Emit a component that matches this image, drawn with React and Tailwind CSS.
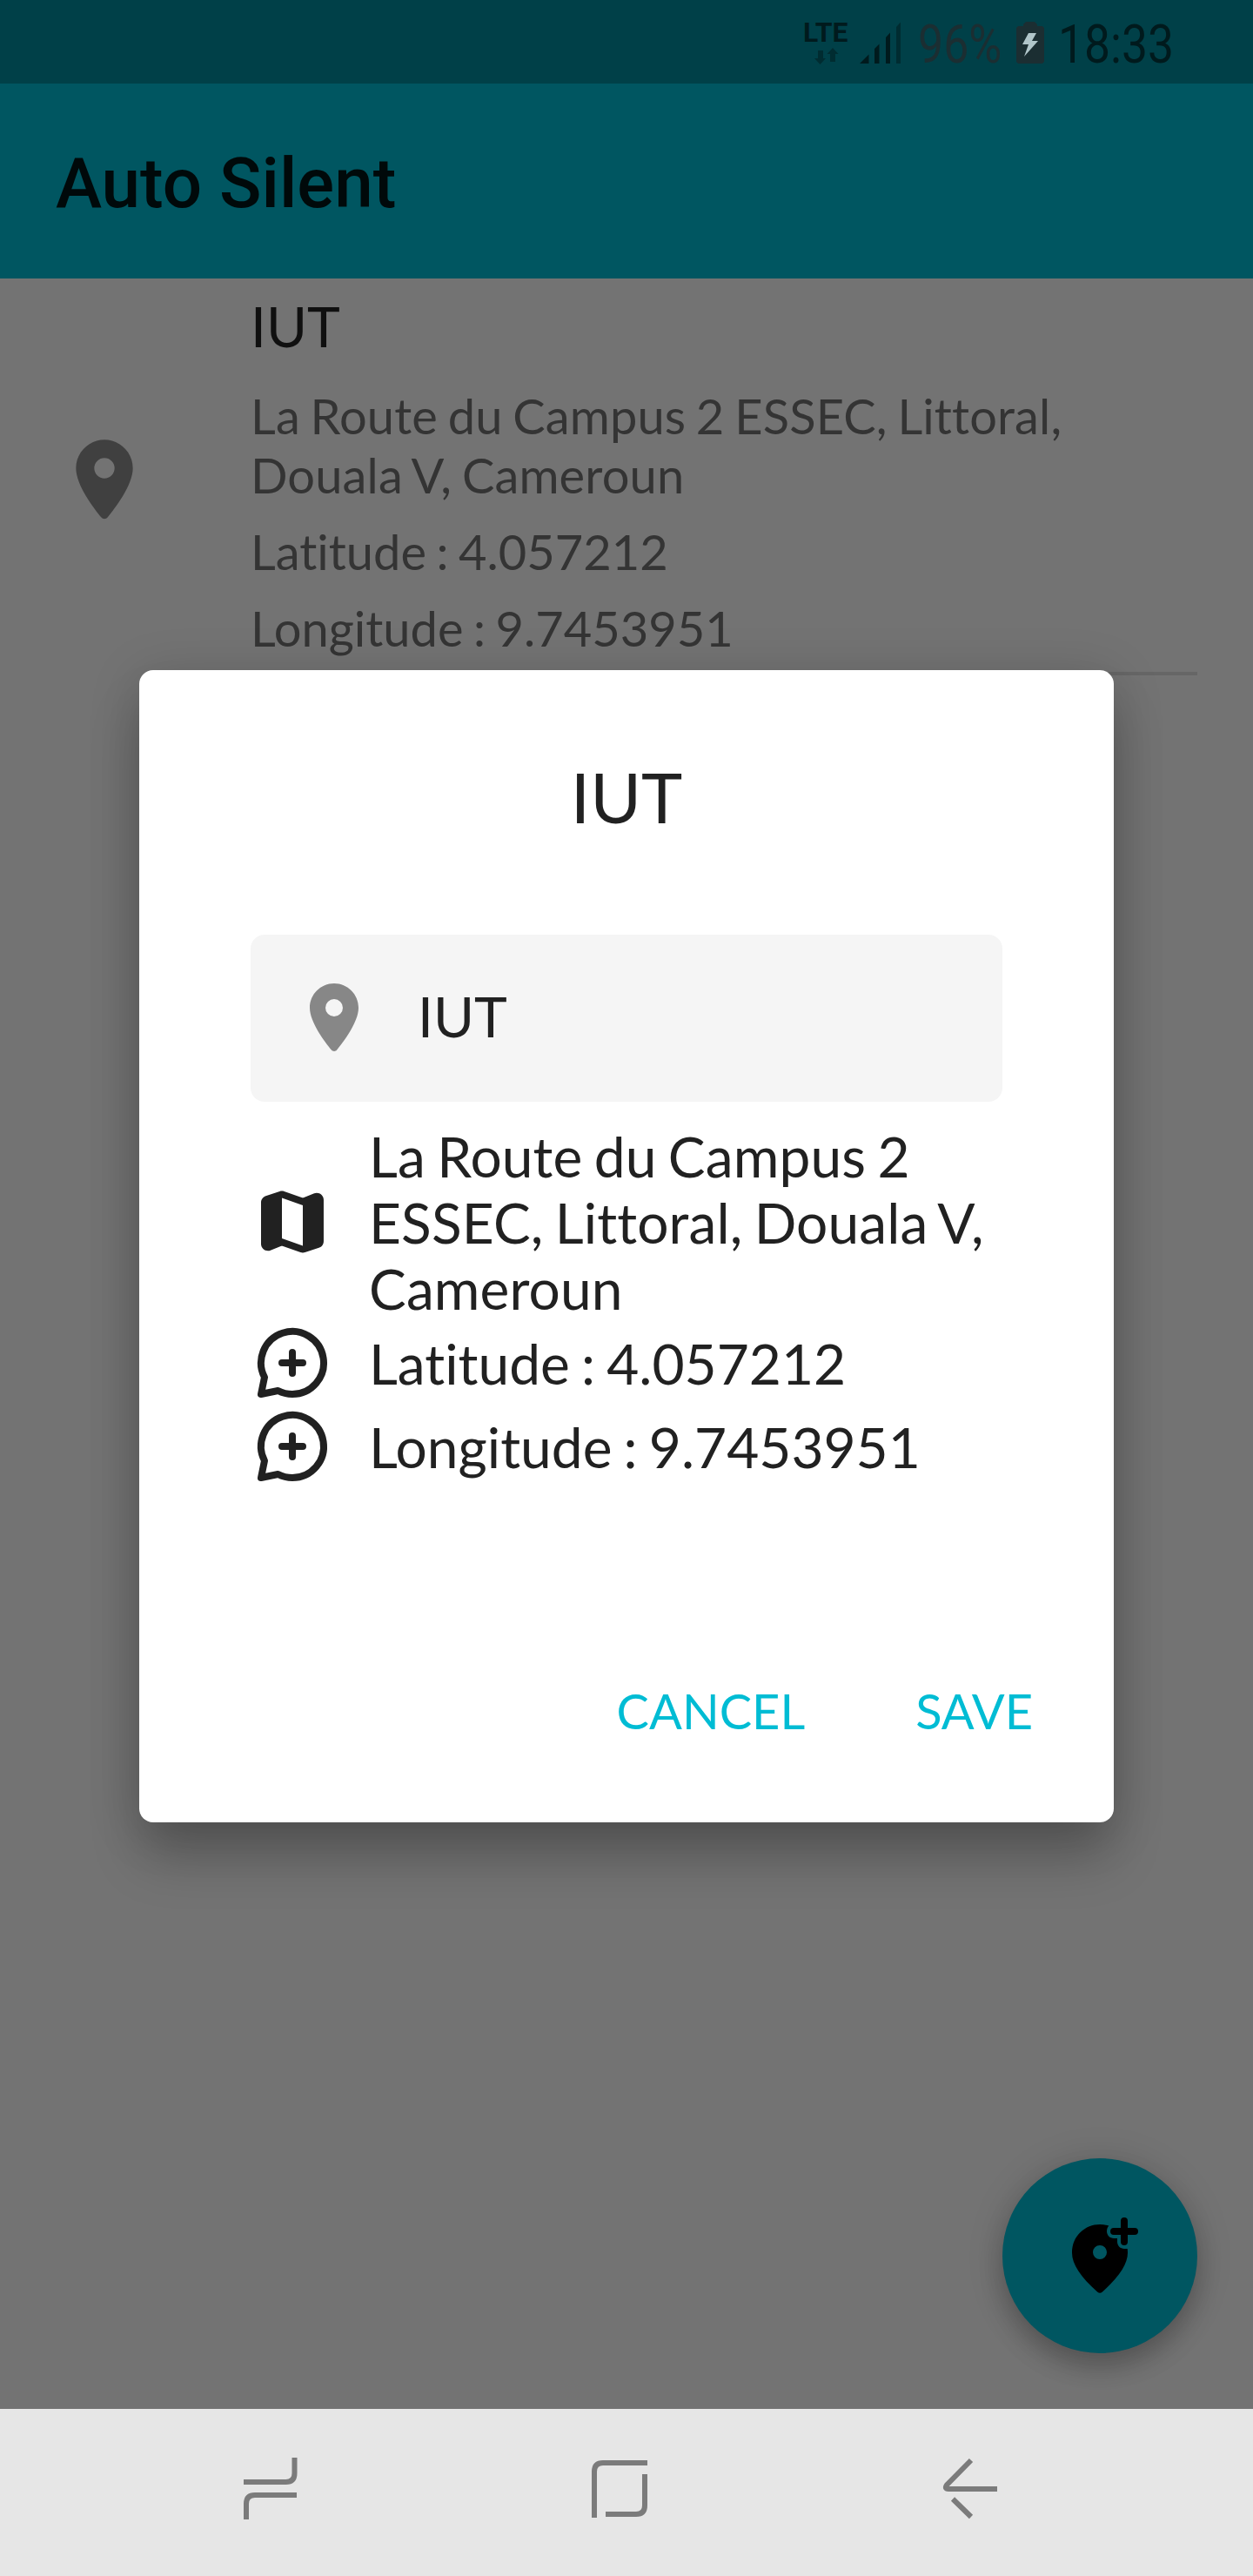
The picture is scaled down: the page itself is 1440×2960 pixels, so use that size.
import React from "react";

const PIN =
  "M12 2C8.13 2 5 5.13 5 9c0 4.17 4.42 9.92 6.24 12.11.4.48 1.13.48 1.53 0C14.58 18.92 19 13.17 19 9c0-3.87-3.13-7-7-7zm0 9.5a2.5 2.5 0 0 1 0-5 2.5 2.5 0 0 1 0 5z";

function PinIcon({ className }) {
  return (
    <svg viewBox="0 0 24 24" fill="currentColor" className={className}>
      <path d={PIN} />
    </svg>
  );
}

function MapIcon() {
  return (
    <svg viewBox="0 0 24 24" fill="currentColor" className="size-24 shrink-0">
      <path d="M14.65 4.98l-5-1.75c-.42-.15-.88-.15-1.3-.01L4.36 4.56C3.55 4.84 3 5.6 3 6.46v11.85c0 1.41 1.41 2.37 2.72 1.86l2.93-1.14c.22-.09.47-.09.69-.01l5 1.75c.42.15.88.15 1.3.01l3.99-1.34c.81-.27 1.36-1.04 1.36-1.9V5.69c0-1.41-1.41-2.37-2.72-1.86l-2.93 1.14c-.22.08-.46.09-.69.01zM15 18.89l-6-2.11V5.11l6 2.11v11.67z" />
    </svg>
  );
}

function CommentPlusIcon() {
  return (
    <svg
      viewBox="0 0 24 24"
      fill="none"
      stroke="currentColor"
      strokeWidth="2"
      strokeLinecap="round"
      strokeLinejoin="round"
      className="size-24 shrink-0"
    >
      <path d="M9 12h3m0 0h3m-3 0v3m0-3V9m0 12a9 9 0 1 0-8-4.873L3 21l4.873-1c1.236.64 2.64 1 4.127 1z" />
    </svg>
  );
}

function AddLocationIcon() {
  return (
    <svg viewBox="0 0 24 24" fill="currentColor" className="size-24">
      <path d="M20 6h2a1 1 0 0 0 0-2h-2V2a1 1 0 0 0-2 0v2h-2a1 1 0 0 0 0 2h2v2a1 1 0 0 0 2 0z" />
      <path d="M14.6 3.4C13.8 3.14 12.93 3 12 3c-4.2 0-8 3.22-8 8.2 0 3.18 2.45 6.92 7.34 11.23.38.33.95.33 1.33 0C17.55 18.12 20 14.38 20 11.2c0-.41-.02-.81-.08-1.2H19c-1.1 0-2-.9-2-2V7h-1c-1.1 0-2-.9-2-2 0-.64.22-1.2.6-1.6zM12 13a2 2 0 1 1 0-4 2 2 0 0 1 0 4z" />
    </svg>
  );
}

function StatusBar() {
  return (
    <header className="flex h-24 bg-[#004048] font-[Roboto,sans-serif]">
      <div className="mt-[22px] ml-[923px] w-[53px]">
        <div className="h-[32px] origin-left scale-x-[1.03] text-[31px] leading-[32px] font-bold whitespace-nowrap text-[#001a1d]">LTE</div>
        <svg viewBox="0 0 30 20" className="mt-px ml-[12px] h-5 w-[30px] fill-[#002c31]">
          <path d="M5 3h6v9h3l-6.500 7-6.500-7h4zM19 16h6V7h3.500L22 0l-6.500 7H19z" />
        </svg>
      </div>
      <svg viewBox="0 0 48 48" className="mt-[25px] ml-[12px] size-12">
        <path fill="#001a1d" d="M0 48L10.500 37.500V48zM17 31l5.500-5.500V48H17zM30 18l5-5.500V48h-5z" />
        <path fill="#002c31" d="M42 6l5-5.500V48h-5z" />
      </svg>
      <div className="mt-[15px] ml-[19px] w-[97px]">
        <div className="origin-left scale-x-[0.85] text-[61px] leading-[72px] whitespace-nowrap text-[#1b2e32]">96%</div>
      </div>
      <svg viewBox="0 0 32 48" className="mt-[25px] ml-[16px] h-12 w-8">
        <path fill="#1b2e32" d="M8 5V3l3-3h10l3 3v2h6l2 2v39l-2 2H2l-2-2V7l2-2z" />
        <path fill="#b0c5c9" d="M14 13h9l-5 9h7L9 40l5-14H7z" />
      </svg>
      <div className="mt-[15px] ml-[16px]">
        <div className="origin-left scale-x-[0.875] text-[61px] leading-[72px] whitespace-nowrap text-[#001a1d]">18:33</div>
      </div>
    </header>
  );
}

function PlaceItem() {
  return (
    <section className="flex items-start">
      <PinIcon className="mt-44 ml-16 size-28 shrink-0 text-[#404040]" />
      <div className="ml-28 w-[1088px] border-b-4 border-[#666666] pt-[15px] pb-4">
        <h2 className="text-[64px] leading-[80px] text-[#101010]">IUT</h2>
        <div className="mt-[29px] flex flex-col gap-5 text-[56px] leading-[68px] text-[#343434] [word-spacing:-0.05em]">
          <p className="tracking-[0.0025em] whitespace-nowrap">
            La Route du Campus 2 ESSEC, Littoral,
            <br />
            Douala V, Cameroun
          </p>
          <p>Latitude : 4.057212</p>
          <p>Longitude : 9.7453951</p>
        </div>
      </div>
    </section>
  );
}

function Dialog() {
  return (
    <div
      role="dialog"
      className="absolute top-[770px] left-40 flex h-[1324px] w-[1120px] flex-col rounded-2xl bg-white px-32 text-[#212121] shadow-[0_44px_60px_-4px_rgba(0,0,0,0.22),0_8px_60px_rgba(0,0,0,0.16)]"
    >
      <h1 className="mt-[95px] text-center text-[80px] leading-[100px]">IUT</h1>
      <div className="mt-[109px] flex h-48 items-center rounded-2xl bg-[#f5f5f5] px-12">
        <PinIcon className="size-24 text-[#878787]" />
        <span className="-mt-[5px] ml-12 text-[64px] leading-[76px]">IUT</span>
      </div>
      <div className="mt-6 flex flex-col text-[64px] leading-[76px] [word-spacing:-0.05em]">
        <div className="flex items-center gap-10">
          <MapIcon />
          <p className="translate-y-px tracking-[0.002em] whitespace-nowrap">
            La Route du Campus 2
            <br />
            ESSEC, Littoral, Douala V,
            <br />
            Cameroun
          </p>
        </div>
        <div className="flex items-center gap-10">
          <CommentPlusIcon />
          <p className="translate-y-px">Latitude : 4.057212</p>
        </div>
        <div className="flex items-center gap-10">
          <CommentPlusIcon />
          <p className="translate-y-px">Longitude : 9.7453951</p>
        </div>
      </div>
      <div className="mt-[222px] -mr-[35px] flex justify-end gap-[127px] text-[56px] leading-[68px] text-[#00bcd4]">
        <button>CANCEL</button>
        <button>SAVE</button>
      </div>
    </div>
  );
}

function NavBar() {
  return (
    <nav className="flex h-48 items-center bg-[#e6e6e6] pb-2 pl-[270px] text-[#7b7b7b]">
      <svg viewBox="0 0 80 80" fill="none" stroke="currentColor" strokeWidth="6" className="size-20">
        <path d="M68.500 4V22q0 10-10 10H10M13 75V57q0-10 10-10H71" />
      </svg>
      <svg viewBox="0 0 80 80" fill="none" stroke="currentColor" strokeWidth="6" className="ml-[322px] size-20">
        <path d="M11 73V20q0-10 10-10H72M69 23v36q0 10-10 10H24" />
      </svg>
      <svg viewBox="0 0 80 80" fill="none" stroke="currentColor" strokeWidth="6" className="ml-[322px] size-20">
        <path d="M42 7L14 35.500q-3 4.500 2 4.500H72M21 51.500L42 72" />
      </svg>
    </nav>
  );
}

export default function App() {
  return (
    <div className="relative flex h-[2960px] w-[1440px] flex-col overflow-hidden bg-[#737373] font-[Lato,sans-serif] [font-variant-ligatures:none]">
      <StatusBar />
      <div className="flex h-56 items-center bg-[#005661] px-16 pt-1.5 font-[Roboto,sans-serif] text-[80px] leading-[96px] font-medium text-[#00090a]">
        Auto Silent
      </div>
      <main className="flex-1">
        <PlaceItem />
      </main>
      <NavBar />
      <button className="absolute right-16 bottom-64 flex size-56 items-center justify-center rounded-full bg-[#005661] text-black shadow-[0_16px_28px_rgba(0,0,0,0.2),0_2px_44px_rgba(0,0,0,0.14)]">
        <AddLocationIcon />
      </button>
      <Dialog />
    </div>
  );
}
